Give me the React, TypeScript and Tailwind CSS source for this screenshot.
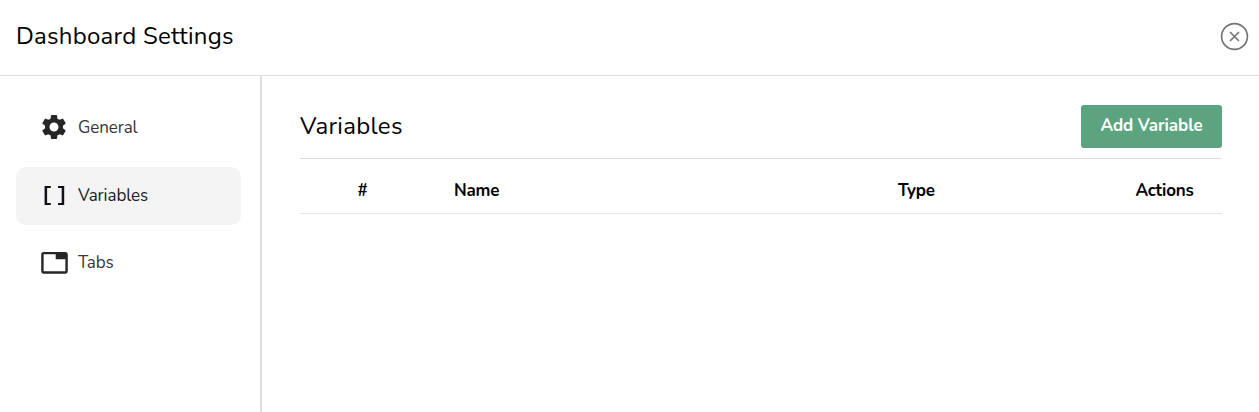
import type { ReactNode } from "react";
import { MdSettings, MdTab } from "react-icons/md";

function BracketsIcon() {
  return (
    <svg width="30" height="30" viewBox="0 0 30 30" fill="#111118">
      <path d="M5.6 5H11.8V7H8.1V22H11.8V24H5.6ZM19 5H25.2V24H19V22H22.7V7H19Z" />
    </svg>
  );
}

function CloseIcon() {
  return (
    <svg width="29" height="29" viewBox="0 0 29 29" fill="none" stroke="#757575" strokeLinecap="round">
      <circle cx="14.5" cy="14.5" r="12.9" strokeWidth="1.7" />
      <path d="M10.5 10.5l8 8M18.5 10.5l-8 8" strokeWidth="1.75" />
    </svg>
  );
}

type NavItemProps = { icon: ReactNode; label: string; active?: boolean };

function NavItem({ icon, label, active = false }: NavItemProps) {
  return (
    <button
      className={
        active
          ? "flex h-[58px] w-[225px] items-center gap-[9px] rounded-[10px] bg-[#f4f4f4] pl-[23px] text-[17px] tracking-[-0.08px] text-[#1b1b1f]"
          : "flex h-[58px] w-[225px] items-center gap-[9px] rounded-[10px] pl-[23px] text-[17px] tracking-[-0.08px] text-[#363636]"
      }
    >
      <span className="flex w-[30px] justify-center">{icon}</span>
      {label}
    </button>
  );
}

export default function App() {
  return (
    <div className="flex h-[412px] w-full flex-col overflow-hidden bg-white font-['Nunito','Lato',sans-serif] text-black">
      <header className="flex h-[76px] shrink-0 items-center justify-between border-b border-[#dedede] pr-[10px] pl-4">
        <h1 className="pb-1 text-[24px] leading-8 tracking-[0.25px]">Dashboard Settings</h1>
        <button aria-label="Close" className="-mt-[2px]">
          <CloseIcon />
        </button>
      </header>
      <div className="flex min-h-0 flex-1">
        <nav className="flex w-[262px] shrink-0 flex-col border-r-2 border-[#dedede] pt-[23px] pl-4">
          <NavItem icon={<MdSettings size={30} color="#262626" className="mb-[2px]" />} label="General" />
          <div className="pt-[10px] pb-[9px]">
            <NavItem active icon={<BracketsIcon />} label="Variables" />
          </div>
          <NavItem icon={<MdTab size={29.5} color="#262626" className="mb-px ml-px" />} label="Tabs" />
        </nav>
        <main className="min-w-0 flex-1 pt-[29px] pr-[37px] pl-[38px]">
          <div className="flex h-[54px] items-start justify-between border-b border-[#dedede]">
            <h2 className="pt-[5px] text-[24px] leading-8 tracking-[0.3px]">Variables</h2>
            <button className="h-[43px] w-[141px] rounded-[3px] bg-[#5ca47f] pb-px text-[17px] font-bold tracking-[-0.08px] text-white">
              Add Variable
            </button>
          </div>
          <table className="w-full table-fixed border-collapse text-[17px] font-bold tracking-[-0.22px]">
            <thead>
              <tr className="h-[54px] border-b border-[#e6e6e6]">
                <th className="w-[125px] pt-[10px] text-center">#</th>
                <th className="w-[444px] pt-[10px] pl-[29px] text-left">Name</th>
                <th className="pt-[10px] pl-[29px] text-left">Type</th>
                <th className="w-[115px] pt-[10px] text-center">Actions</th>
              </tr>
            </thead>
          </table>
        </main>
      </div>
    </div>
  );
}
